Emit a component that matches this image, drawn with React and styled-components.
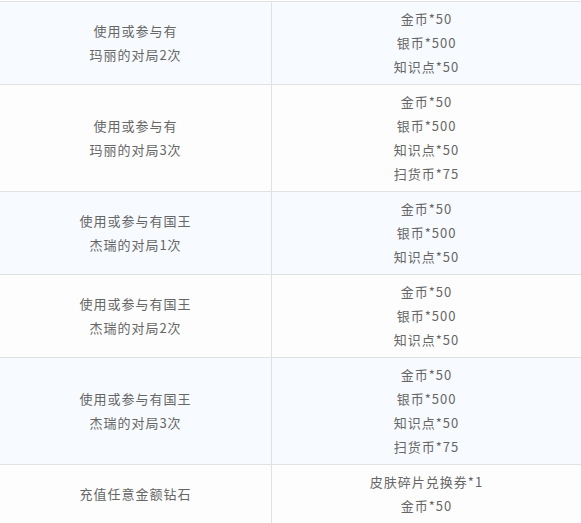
import React from "react";
import styled, { createGlobalStyle } from "styled-components";

const Global = createGlobalStyle`
  html, body { margin: 0; padding: 0; background: #ffffff; }
  body { font-family: "Noto Sans CJK SC", "Noto Sans", sans-serif; }
`;

const Table = styled.div`
  padding-top: 1px;
  width: 581px;
`;

const Row = styled.div`
  display: grid;
  grid-template-columns: 272px 1fr;
  border-top: 1px solid #e1e1e1;
  background: ${(p) => (p.$alt ? "#f7faff" : "#fdfdfd")};
`;

const Cell = styled.div`
  display: flex;
  flex-direction: column;
  align-items: center;
  justify-content: center;
  padding: 5px 4px;
  font-size: 13px;
  line-height: 24px;
  letter-spacing: 1px;
  color: #666666;
  text-align: center;
  border-right: ${(p) => (p.$left ? "1px solid #e1e1e1" : "none")};
`;

const Line = styled.div`
  white-space: nowrap;
`;

const rows = [
  { cond: ["使用或参与有", "玛丽的对局2次"], rewards: ["金币*50", "银币*500", "知识点*50"] },
  { cond: ["使用或参与有", "玛丽的对局3次"], rewards: ["金币*50", "银币*500", "知识点*50", "扫货币*75"] },
  { cond: ["使用或参与有国王", "杰瑞的对局1次"], rewards: ["金币*50", "银币*500", "知识点*50"] },
  { cond: ["使用或参与有国王", "杰瑞的对局2次"], rewards: ["金币*50", "银币*500", "知识点*50"] },
  { cond: ["使用或参与有国王", "杰瑞的对局3次"], rewards: ["金币*50", "银币*500", "知识点*50", "扫货币*75"] },
  { cond: ["充值任意金额钻石"], rewards: ["皮肤碎片兑换券*1", "金币*50"] },
];

export default function App() {
  return (
    <>
      <Global />
      <Table>
        {rows.map((r, i) => (
          <Row key={i} $alt={i % 2 === 0}>
            <Cell $left>
              {r.cond.map((t, j) => (
                <Line key={j}>{t}</Line>
              ))}
            </Cell>
            <Cell>
              {r.rewards.map((t, j) => (
                <Line key={j}>{t}</Line>
              ))}
            </Cell>
          </Row>
        ))}
      </Table>
    </>
  );
}
